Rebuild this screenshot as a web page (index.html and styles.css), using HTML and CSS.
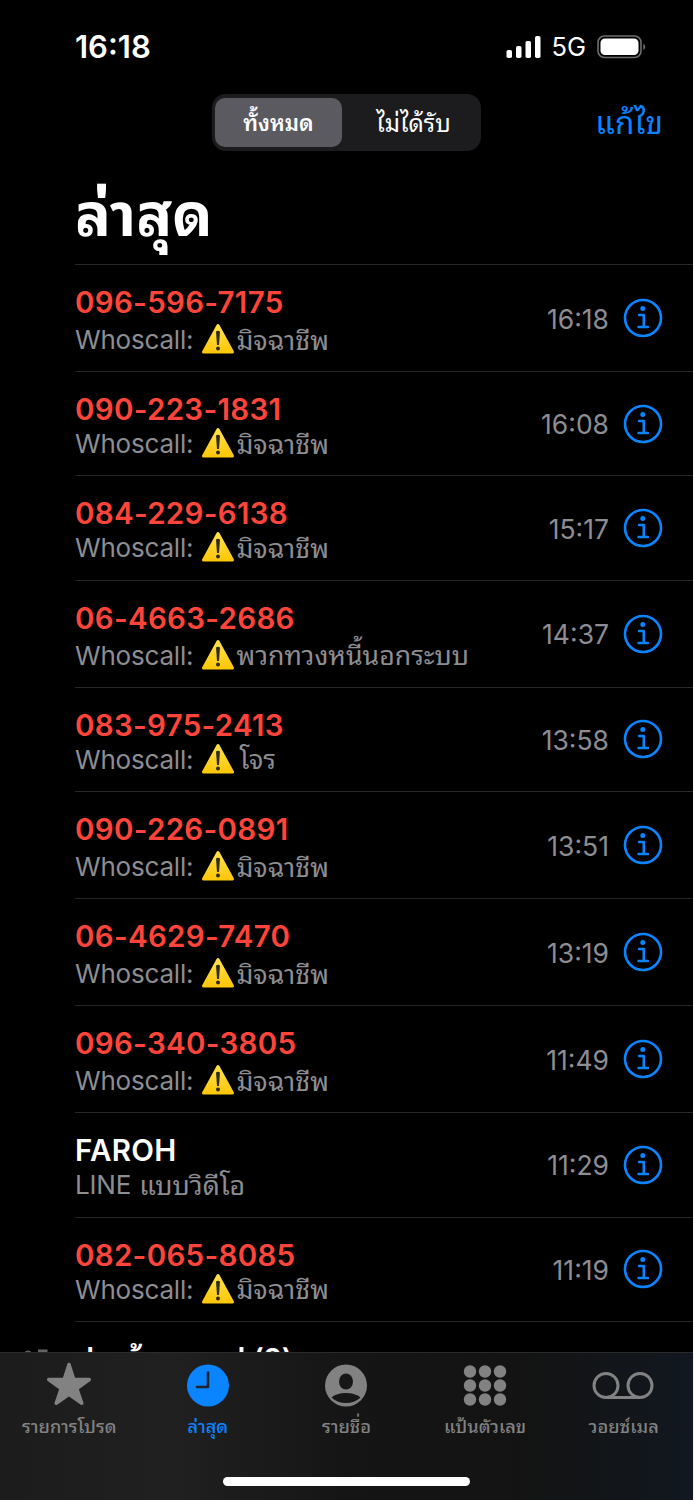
FILE: index.html
```html
<!DOCTYPE html>
<html lang="th">
<head>
  <meta charset="UTF-8">
  <meta name="viewport" content="width=device-width, initial-scale=1.0">
  <title>ล่าสุด</title>
  <link rel="stylesheet" href="styles.css">
</head>
<body>
  <svg class="sprite">
    <symbol id="warning" viewBox="0 0 34 32">
      <linearGradient id="warningFill" x1="0" y1="0" x2="0" y2="1">
        <stop offset="0" stop-color="#ffe14a"></stop>
        <stop offset="1" stop-color="#fdc70a"></stop>
      </linearGradient>
      <path d="M17 2.500 31.500 29h-29z" fill="url(#warningFill)" stroke="url(#warningFill)" stroke-width="3" stroke-linejoin="round"></path>
      <path d="M15 8.500q2-1.600 4 0l-1 13.500h-2z" fill="#2f2c1c"></path>
      <circle cx="17" cy="25.600" r="2" fill="#2f2c1c"></circle>
    </symbol>
    <symbol id="info" viewBox="0 0 40 40">
      <circle cx="20" cy="20" r="18" fill="none" stroke="currentColor" stroke-width="2.600"></circle>
      <circle cx="19.800" cy="10.600" r="2.500" fill="currentColor"></circle>
      <path d="M16.200 17h4.600v12M15.600 29h9.200" fill="none" stroke="currentColor" stroke-width="2.600" stroke-linecap="round" stroke-linejoin="round"></path>
    </symbol>
  </svg>

  <div class="phone">
    <header class="status-bar">
      <span class="clock">16:18</span>
      <div class="status-icons">
        <svg class="signal" viewBox="0 0 36 24" fill="#fff">
          <rect x="0.500" y="15" width="5.500" height="8" rx="1.800"></rect>
          <rect x="10" y="11" width="5.500" height="12" rx="1.800"></rect>
          <rect x="19.500" y="6" width="5.500" height="17" rx="1.800"></rect>
          <rect x="29" y="1" width="5.500" height="22" rx="1.800"></rect>
        </svg>
        <span class="network">5G</span>
        <svg class="battery" viewBox="0 0 50 24">
          <rect x="1" y="1" width="43" height="21.500" rx="6.500" fill="none" stroke="#6d6d6d" stroke-width="1.600"></rect>
          <rect x="3.500" y="3.500" width="38" height="16.500" rx="4.500" fill="#fff"></rect>
          <path d="M46.300 8.500q4 3.300 0 6.800z" fill="#6d6d6d"></path>
        </svg>
      </div>
    </header>

    <nav class="toolbar">
      <div class="segmented">
        <button class="segment active">ทั้งหมด</button>
        <button class="segment">ไม่ได้รับ</button>
      </div>
      <button class="edit">แก้ไข</button>
    </nav>

    <h1 class="title">ล่าสุด</h1>

    <ul class="calls">
      <li class="call tall missed">
        <div class="who">
          <div class="name">096-596-7175</div>
          <div class="label">Whoscall: <svg class="warning"><use href="#warning"></use></svg><span class="th">มิจฉาชีพ</span></div>
        </div>
        <time>16:18</time>
        <svg class="info"><use href="#info"></use></svg>
      </li>
      <li class="call missed">
        <div class="who">
          <div class="name">090-223-1831</div>
          <div class="label">Whoscall: <svg class="warning"><use href="#warning"></use></svg><span class="th">มิจฉาชีพ</span></div>
        </div>
        <time>16:08</time>
        <svg class="info"><use href="#info"></use></svg>
      </li>
      <li class="call missed">
        <div class="who">
          <div class="name">084-229-6138</div>
          <div class="label">Whoscall: <svg class="warning"><use href="#warning"></use></svg><span class="th">มิจฉาชีพ</span></div>
        </div>
        <time>15:17</time>
        <svg class="info"><use href="#info"></use></svg>
      </li>
      <li class="call tall missed">
        <div class="who">
          <div class="name">06-4663-2686</div>
          <div class="label">Whoscall: <svg class="warning"><use href="#warning"></use></svg><span class="th">พวกทวงหนี้นอกระบบ</span></div>
        </div>
        <time>14:37</time>
        <svg class="info"><use href="#info"></use></svg>
      </li>
      <li class="call missed">
        <div class="who">
          <div class="name">083-975-2413</div>
          <div class="label">Whoscall: <svg class="warning"><use href="#warning"></use></svg><span class="th lead-vowel">โจร</span></div>
        </div>
        <time>13:58</time>
        <svg class="info"><use href="#info"></use></svg>
      </li>
      <li class="call tall missed">
        <div class="who">
          <div class="name">090-226-0891</div>
          <div class="label">Whoscall: <svg class="warning"><use href="#warning"></use></svg><span class="th">มิจฉาชีพ</span></div>
        </div>
        <time>13:51</time>
        <svg class="info"><use href="#info"></use></svg>
      </li>
      <li class="call tall missed">
        <div class="who">
          <div class="name">06-4629-7470</div>
          <div class="label">Whoscall: <svg class="warning"><use href="#warning"></use></svg><span class="th">มิจฉาชีพ</span></div>
        </div>
        <time>13:19</time>
        <svg class="info"><use href="#info"></use></svg>
      </li>
      <li class="call tall missed">
        <div class="who">
          <div class="name">096-340-3805</div>
          <div class="label">Whoscall: <svg class="warning"><use href="#warning"></use></svg><span class="th">มิจฉาชีพ</span></div>
        </div>
        <time>11:49</time>
        <svg class="info"><use href="#info"></use></svg>
      </li>
      <li class="call">
        <div class="who">
          <div class="name">FAROH</div>
          <div class="label">LINE <span class="th">แบบวิดีโอ</span></div>
        </div>
        <time>11:29</time>
        <svg class="info"><use href="#info"></use></svg>
      </li>
      <li class="call missed">
        <div class="who">
          <div class="name">082-065-8085</div>
          <div class="label">Whoscall: <svg class="warning"><use href="#warning"></use></svg><span class="th">มิจฉาชีพ</span></div>
        </div>
        <time>11:19</time>
        <svg class="info"><use href="#info"></use></svg>
      </li>
      <li class="call outgoing">
        <svg class="outgoing-icon" viewBox="0 0 28 24" fill="none" stroke="#636366" stroke-width="3">
          <path d="M2 7q4-6 8 0M16 3h8v8M24 3l-8 8"></path>
        </svg>
        <div class="who">
          <div class="name">ปลาบ้านควนป (2)</div>
        </div>
      </li>
    </ul>

    <footer class="tab-bar">
      <div class="tabs">
        <a class="tab">
          <svg viewBox="0 0 64 48" fill="currentColor" stroke="currentColor" stroke-width="3.500" stroke-linejoin="round">
            <path d="M32 4.500l4.800 15h15.500L39.800 28.600l5 14.600-12.800-9-12.800 9 5-14.600-12.500-9.100h15.500z"></path>
          </svg>
          <span>รายการโปรด</span>
        </a>
        <a class="tab active">
          <svg viewBox="0 0 64 48">
            <circle cx="32" cy="25.500" r="21" fill="currentColor"></circle>
            <path d="M32 12.500v14.500h-11" fill="none" stroke="#1b2430" stroke-width="2.600" stroke-linecap="round" stroke-linejoin="round"></path>
          </svg>
          <span>ล่าสุด</span>
        </a>
        <a class="tab">
          <svg viewBox="0 0 64 48">
            <circle cx="32" cy="25.500" r="21" fill="currentColor"></circle>
            <ellipse cx="32" cy="21.500" rx="7" ry="8" fill="#171717"></ellipse>
            <path d="M17.500 37.500q5-4.500 14.500-4.500t14.500 4.500q-6 5.500-14.500 5.500t-14.500-5.500z" fill="#171717"></path>
          </svg>
          <span>รายชื่อ</span>
        </a>
        <a class="tab">
          <svg viewBox="0 0 64 48" fill="currentColor">
            <circle cx="17" cy="11.500" r="6.200"></circle><circle cx="32" cy="11.500" r="6.200"></circle><circle cx="47" cy="11.500" r="6.200"></circle>
            <circle cx="17" cy="25.500" r="6.200"></circle><circle cx="32" cy="25.500" r="6.200"></circle><circle cx="47" cy="25.500" r="6.200"></circle>
            <circle cx="17" cy="39.500" r="6.200"></circle><circle cx="32" cy="39.500" r="6.200"></circle><circle cx="47" cy="39.500" r="6.200"></circle>
          </svg>
          <span>แป้นตัวเลข</span>
        </a>
        <a class="tab voicemail">
          <svg viewBox="0 0 64 48" fill="none" stroke="currentColor" stroke-width="3">
            <circle cx="15" cy="25.500" r="12"></circle>
            <circle cx="49" cy="25.500" r="12"></circle>
            <path d="M15 37.500h34"></path>
          </svg>
          <span>วอยซ์เมล</span>
        </a>
      </div>
      <div class="home-indicator"></div>
    </footer>
  </div>
</body>
</html>
```

FILE: styles.css
```css
* {
  box-sizing: border-box;
}
body {
  margin: 0;
  background-color: #f4f4f4;
  font-family: Inter, "Noto Sans Thai Looped", "Noto Looped Thai", Loma, Garuda, "Noto Sans", sans-serif;
  color: #fff;
}
button {
  border: none;
  padding: 0;
  background: none;
  font-family: inherit;
  color: inherit;
}
.sprite {
  position: absolute;
  width: 0;
  height: 0;
}
.phone {
  display: flex;
  flex-direction: column;
  width: 693px;
  height: 1500px;
  overflow: hidden;
  background-color: #000;
}
.status-bar {
  flex: none;
  display: flex;
  align-items: center;
  justify-content: space-between;
  height: 93px;
  padding: 0 46px 0 75px;
}
.clock {
  font-size: 31px;
  font-weight: 600;
}
.status-icons {
  display: flex;
  align-items: center;
}
.signal {
  width: 36px;
  height: 24px;
}
.network {
  margin: 0 11px 0 9px;
  font-size: 25.5px;
  font-weight: 400;
}
.battery {
  width: 50px;
  height: 24px;
}
.toolbar {
  flex: none;
  display: grid;
  grid-template-columns: 1fr 269px 1fr;
  height: 58px;
  padding-top: 1px;
}
.segmented {
  grid-column: 2;
  display: grid;
  grid-template-columns: 127px 1fr;
  gap: 3px;
  padding: 4px 3px;
  border-radius: 14px;
  background-color: #1c1c1f;
}
.segment {
  border-radius: 10px;
  padding: 0 0 4px 4px;
  font-size: 24px;
}
.segment.active {
  padding: 0 0 4px;
  background-color: #5b5a60;
  font-size: 22px;
  font-weight: 600;
}
.edit {
  justify-self: end;
  margin-right: 30px;
  padding-bottom: 5px;
  font-size: 31.5px;
  color: #0a84ff;
}
.title {
  flex: none;
  height: 113px;
  margin: 0 0 0 75px;
  font-size: 59.5px;
  font-weight: 700;
  line-height: 126px;
}
.calls {
  flex: 1;
  min-height: 0;
  overflow: hidden;
  margin: 0;
  padding: 0;
  list-style: none;
}
.call {
  display: flex;
  height: 104.4px;
  margin-left: 75px;
  padding-right: 30px;
  border-top: 1px solid #262626;
}
.call.tall {
  height: 107px;
}
.who {
  flex: 1;
  padding-top: 19px;
  white-space: nowrap;
}
.name {
  font-size: 29.5px;
  font-weight: 600;
  line-height: 36px;
  letter-spacing: 0.3px;
}
.missed .name {
  color: #ff453a;
}
.label {
  display: flex;
  align-items: center;
  height: 33px;
  font-size: 26px;
  letter-spacing: -0.2px;
  white-space: pre;
  color: #8d8d92;
}
.label .th {
  padding: 0 0 4px 1px;
  font-size: 26.7px;
  letter-spacing: 0;
}
.label .lead-vowel {
  padding-left: 4px;
}
.tall .label {
  margin-top: 3px;
}
.warning {
  width: 34px;
  height: 32px;
  margin: 0 0 1px 1px;
}
.call time {
  align-self: center;
  padding-top: 1px;
  font-size: 26.5px;
  color: #8d8d92;
}
.info {
  align-self: center;
  width: 40px;
  height: 40px;
  margin-left: 14px;
  color: #0a84ff;
}
.outgoing {
  position: relative;
}
.outgoing .name {
  letter-spacing: -0.2px;
}
.outgoing-icon {
  position: absolute;
  left: -53px;
  top: 26px;
  width: 28px;
  height: 24px;
}
.tab-bar {
  flex: none;
  height: 148px;
  border-top: 1px solid #2b2b2b;
  background: linear-gradient(90deg, #1c1c1c, #202020 25%, #151515 50%, #131313 75%, #121820);
}
.tabs {
  display: grid;
  grid-template-columns: repeat(5, 1fr);
  height: 124px;
  padding-top: 7px;
}
.tab {
  display: flex;
  flex-direction: column;
  align-items: center;
  font-size: 18.2px;
  font-weight: 500;
  color: #828282;
}
.tab.active {
  color: #0a84ff;
}
.tab svg {
  width: 64px;
  height: 48px;
}
.tab.voicemail svg {
  margin-right: 2px;
}
.tab span {
  line-height: 36px;
}
.home-indicator {
  width: 247px;
  height: 9px;
  margin: 0 auto;
  border-radius: 5px;
  background-color: #fff;
}
```
